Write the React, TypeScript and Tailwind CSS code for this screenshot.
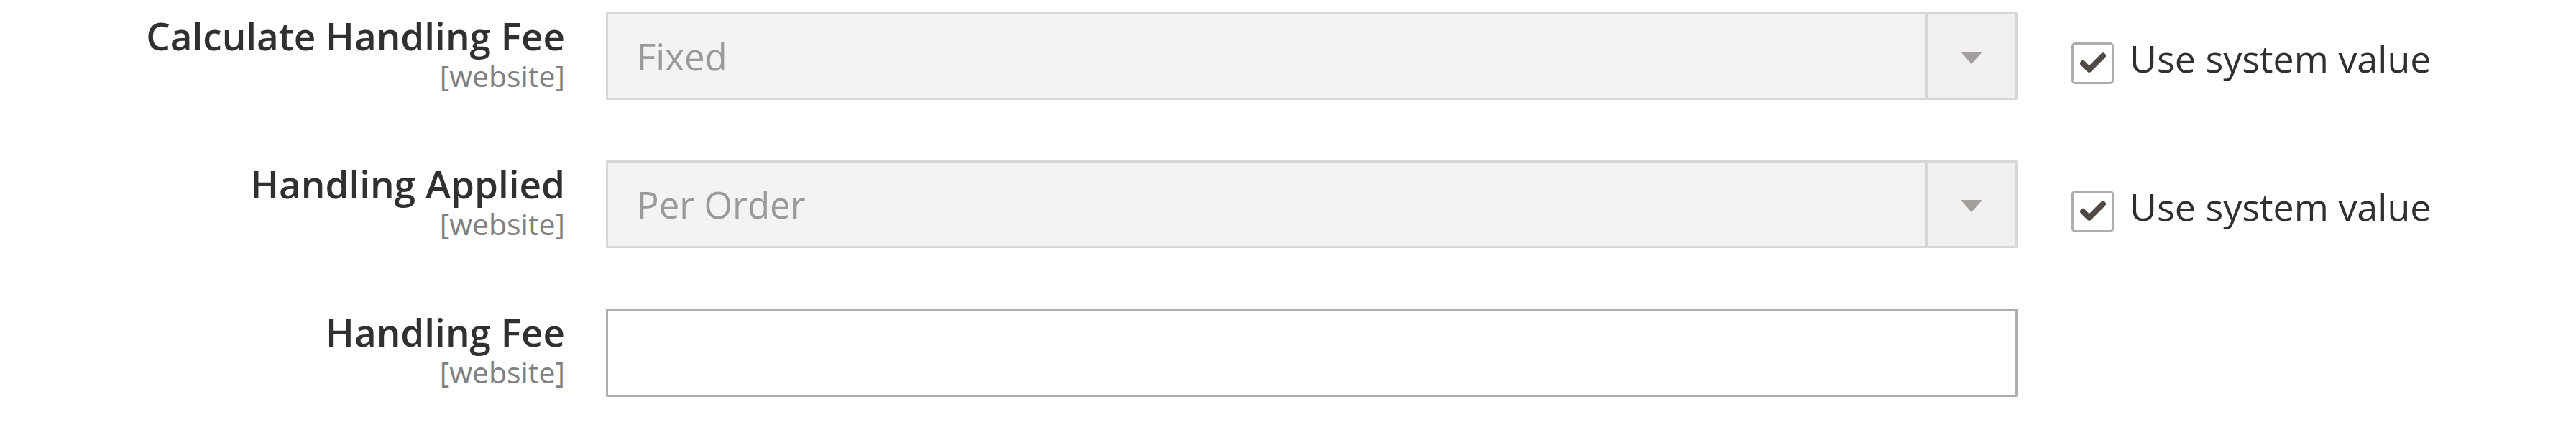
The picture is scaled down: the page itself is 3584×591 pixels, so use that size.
import { Check } from "lucide-react";

type Row = {
  label: string;
  scope: string;
  kind: "select" | "input";
  value?: string;
  inherit?: boolean;
};

const rows: Row[] = [
  { label: "Calculate Handling Fee", scope: "[website]", kind: "select", value: "Fixed", inherit: true },
  { label: "Handling Applied", scope: "[website]", kind: "select", value: "Per Order", inherit: true },
  { label: "Handling Fee", scope: "[website]", kind: "input" },
];

export default function App() {
  return (
    <div className="h-[591px] w-[3584px] overflow-hidden bg-white font-['Open_Sans',sans-serif]">
      <div className="flex flex-col gap-[84px] pt-[17px]">
        {rows.map((row) => (
          <FieldRow key={row.label} row={row} />
        ))}
      </div>
    </div>
  );
}

function FieldRow({ row }: { row: Row }) {
  return (
    <div className="flex items-start">
      <div className="flex w-[786px] flex-col items-end pt-[6px]">
        <div className="text-[53px] font-semibold leading-[53px] text-[#303030]">
          {row.label}
        </div>
        <div className="mt-[9px] text-[41px] leading-[41px] text-[#808080]">
          {row.scope}
        </div>
      </div>

      <div className="ml-[57px] w-[1964px]">
        {row.kind === "select" ? (
          <SelectBox value={row.value ?? ""} />
        ) : (
          <div className="h-[123px] w-full rounded-[2px] border-[3px] border-[#adadad] bg-white" />
        )}
      </div>

      {row.inherit && (
        <div className="ml-[75px] flex items-center gap-[22px] pt-[35px]">
          <span className="flex h-[58px] w-[59px] items-center justify-center rounded-[5px] border-[3px] border-[#adadad] bg-white">
            <Check className="h-[42px] w-[42px] text-[#514943]" strokeWidth={4.5} />
          </span>
          <span className="pb-[14px] text-[52px] leading-[58px] text-[#303030]">Use system value</span>
        </div>
      )}
    </div>
  );
}

function SelectBox({ value }: { value: string }) {
  return (
    <div className="flex h-[122px] w-full rounded-[2px] border-[3px] border-[#d6d6d6] bg-[#f3f3f3]">
      <div className="flex flex-1 items-center pl-[40px] text-[51px] text-[#9a9a9a]">
        {value}
      </div>
      <div className="flex w-[126px] items-center justify-center border-l-[4px] border-[#d6d6d6] bg-[#f0f0f0] pt-[4px]">
        <svg width="30" height="17" viewBox="0 0 30 17">
          <path d="M0 0 H30 L15 17 Z" fill="#a49f9c" />
        </svg>
      </div>
    </div>
  );
}
